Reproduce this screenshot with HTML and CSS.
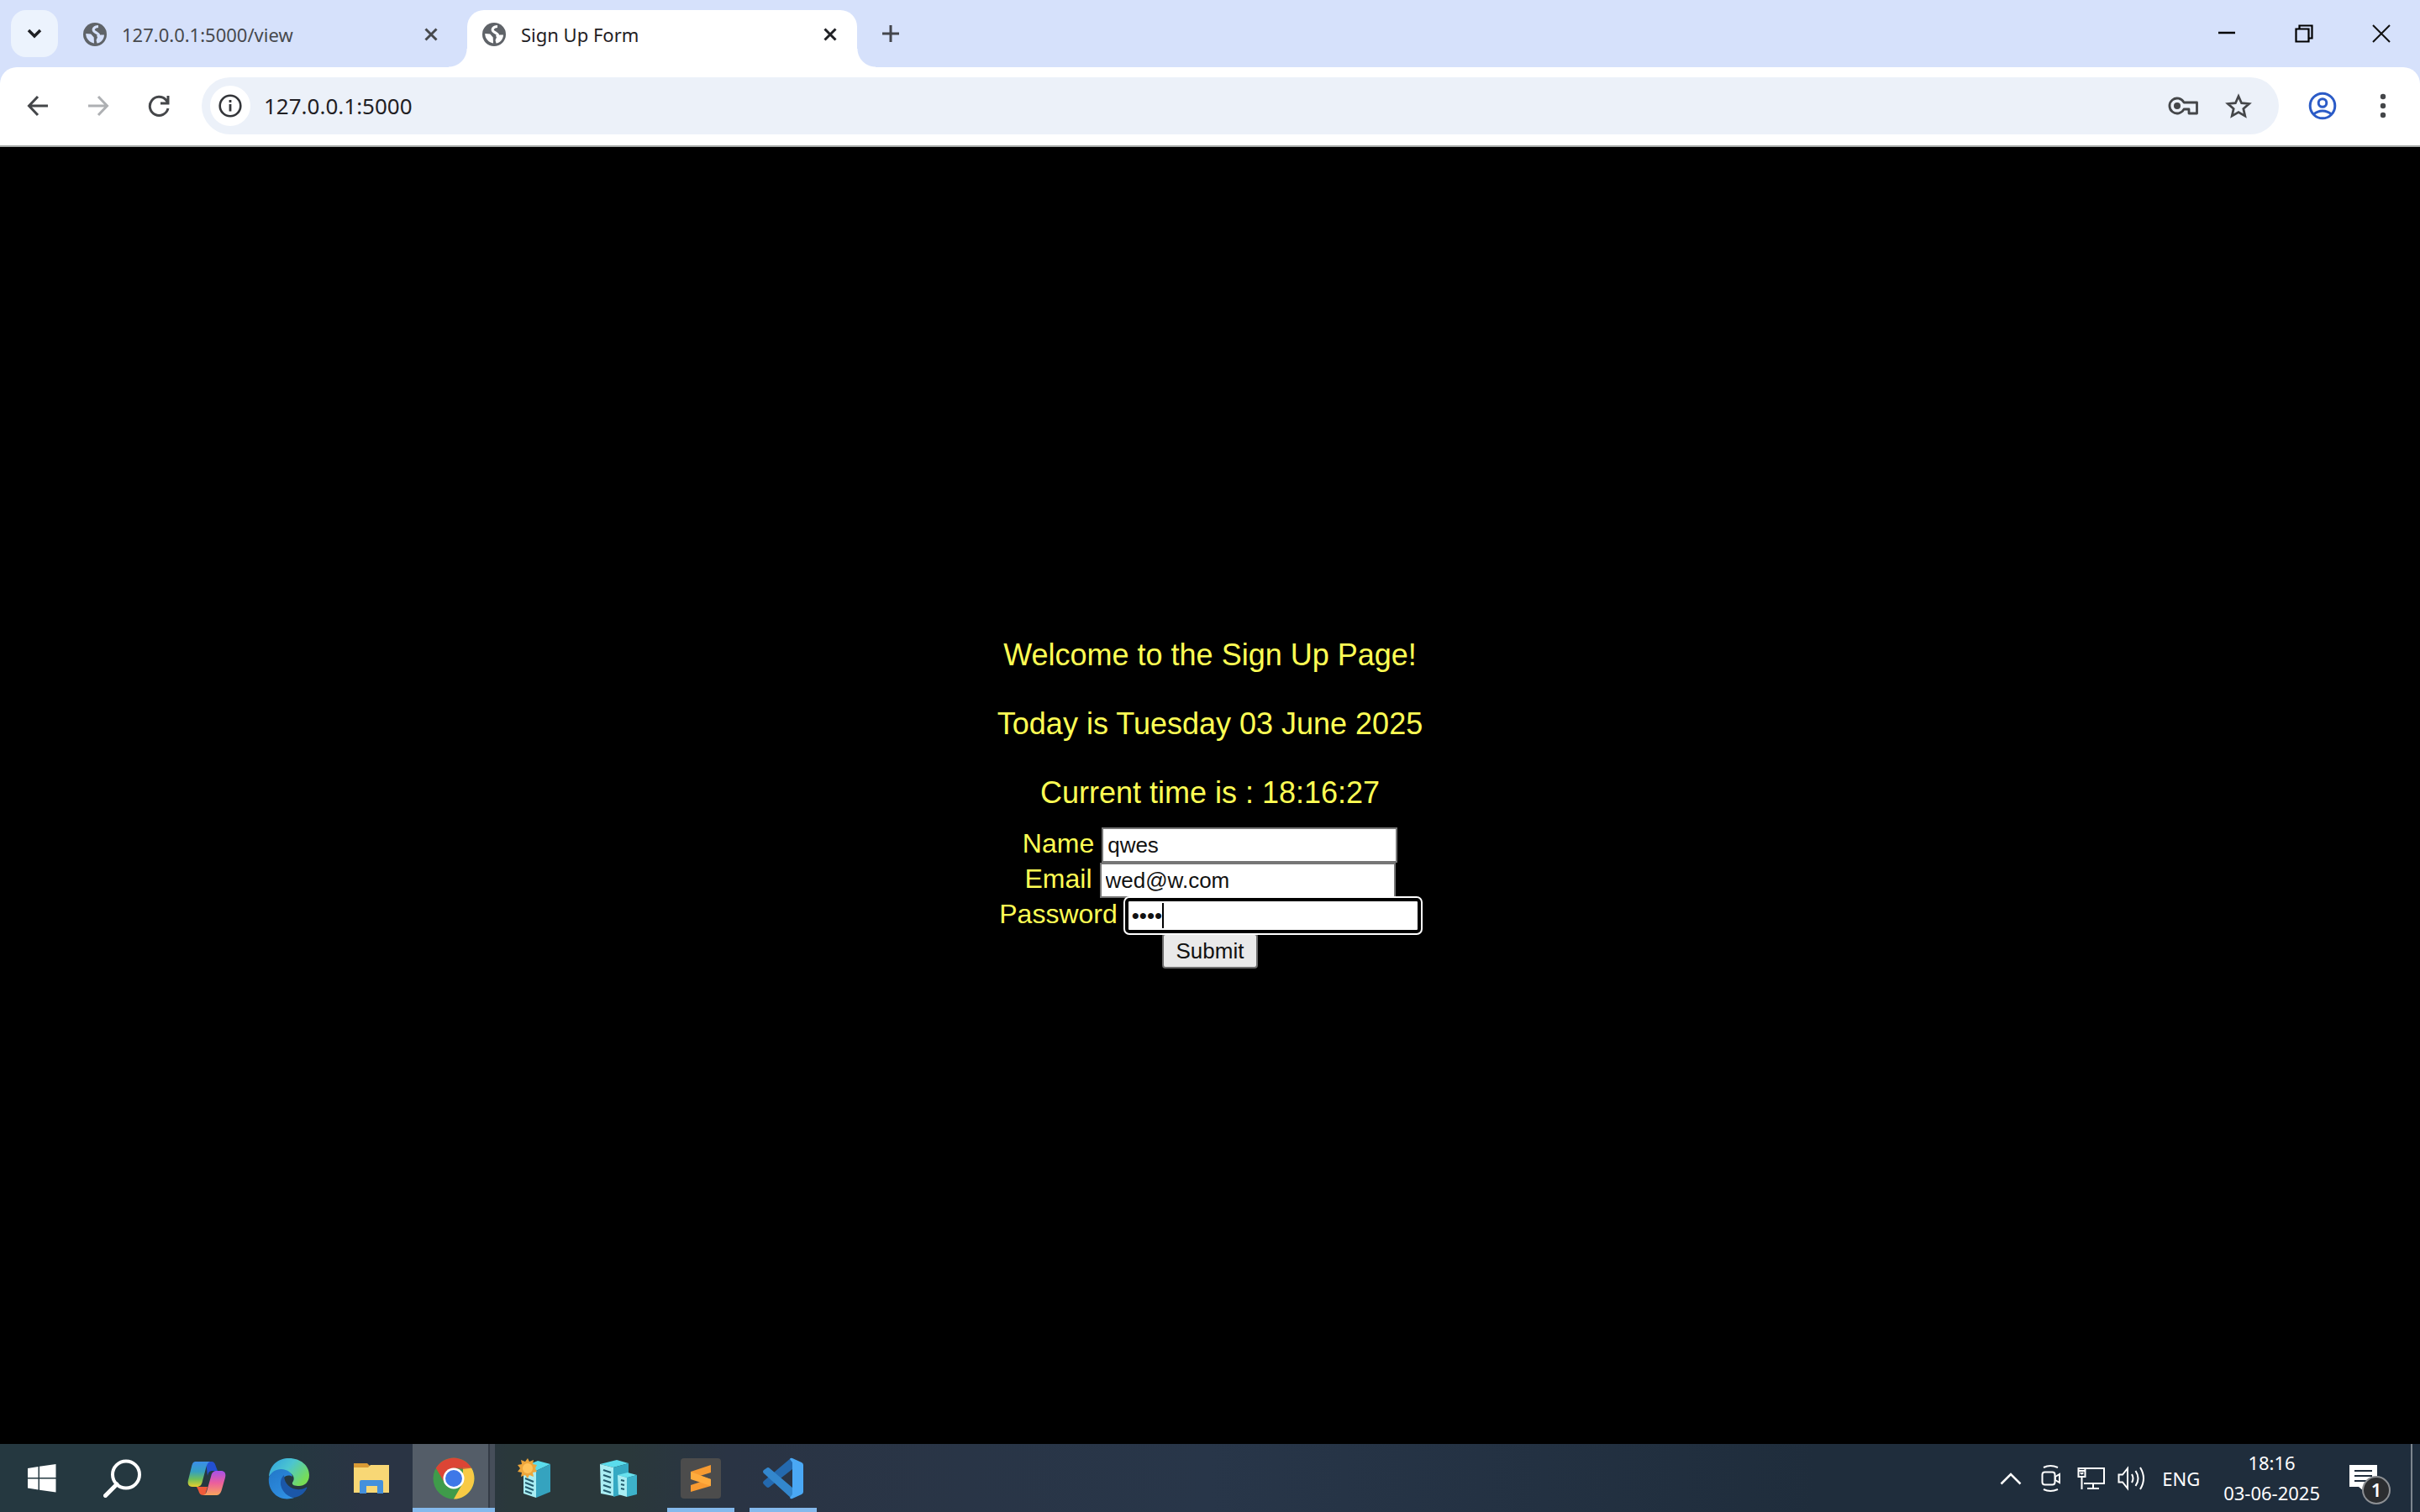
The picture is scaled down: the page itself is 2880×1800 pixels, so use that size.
FILE: index.html
```html
<!DOCTYPE html>
<html lang="en">
<head>
<meta charset="utf-8">
<title>Sign Up Form</title>
<link rel="stylesheet" href="styles.css">
</head>
<body>
<svg class="defs" aria-hidden="true">
  <symbol id="globe" viewBox="0 0 28 28">
    <circle cx="14" cy="14" r="14" fill="#5f6368"/>
    <path fill="none" stroke="currentColor" stroke-width="3.200" d="M18 4.500c-5 0-8 4-4 6.500s6 3 3 6"/>
    <path fill="currentColor" d="M25 14.500c0 5-4 9.500-8.500 10l-1-3.500 2-5 3-1.500z"/>
    <path fill="currentColor" d="M3.200 13l6 .5 3.500 4 .300 7c-5-1-9.800-5-9.800-11.500z"/>
  </symbol>
  <symbol id="cross" viewBox="0 0 16 16"><path d="M1.500 1.500l13 13m0-13l-13 13" fill="none" stroke="currentColor" stroke-width="3"/></symbol>
</svg>

<header class="browser">
  <div class="tabstrip">
    <button class="tab-search" aria-label="Search tabs"><svg width="18" height="12" viewBox="0 0 18 12"><path d="M2 2l7 7 7-7" fill="none" stroke="#1f2024" stroke-width="3.500"/></svg></button>
    <div class="tab">
      <svg class="favicon on-blue"><use href="#globe"/></svg>
      <span class="tab-title">127.0.0.1:5000/view</span>
      <button class="tab-close" aria-label="Close tab"><svg><use href="#cross"/></svg></button>
    </div>
    <div class="tab active">
      <svg class="favicon"><use href="#globe"/></svg>
      <span class="tab-title">Sign Up Form</span>
      <button class="tab-close" aria-label="Close tab"><svg><use href="#cross"/></svg></button>
    </div>
    <button class="new-tab" aria-label="New tab"><svg width="20" height="20" viewBox="0 0 20 20"><path d="M10 0v20M0 10h20" stroke="#44464c" stroke-width="3"/></svg></button>
    <div class="window-buttons">
      <button aria-label="Minimize"><svg width="22" height="22" viewBox="0 0 22 22"><path d="M1 10h20" stroke="#000" stroke-width="2.500"/></svg></button>
      <button aria-label="Restore"><svg width="22" height="22" viewBox="0 0 22 22" fill="none" stroke="#000" stroke-width="2.200"><path d="M1.500 5.500h15v15h-15zM5.500 5V1.500h15v15H17"/></svg></button>
      <button aria-label="Close"><svg width="22" height="22" viewBox="0 0 22 22"><path d="M1 1l20 20M21 1L1 21" stroke="#111" stroke-width="2"/></svg></button>
    </div>
  </div>
  <div class="toolbar">
    <nav class="nav-buttons">
      <button aria-label="Back"><svg width="26" height="26" viewBox="0 0 26 26" fill="none" stroke="#444649" stroke-width="3"><path d="M25 13H3M13 2L2.500 13 13 24"/></svg></button>
      <button aria-label="Forward"><svg width="26" height="26" viewBox="0 0 26 26" fill="none" stroke="#aeb0b3" stroke-width="3"><path d="M1 13h22M13 2l10.500 11L13 24"/></svg></button>
      <button aria-label="Reload"><svg width="26" height="26" viewBox="0 0 26 26" fill="none" stroke="#444649" stroke-width="3"><path d="M24 16A11 11 0 1 1 21.500 6L24 9M24 1v9h-9"/></svg></button>
    </nav>
    <div class="omnibox">
      <button class="site-info" aria-label="Site information"><svg width="28" height="28" viewBox="0 0 28 28"><circle cx="14" cy="14" r="12.300" fill="none" stroke="#333539" stroke-width="2.600"/><path d="M14 12v8.500M14 7v3" stroke="#333539" stroke-width="2.800"/></svg></button>
      <input class="url" type="text" value="127.0.0.1:5000" aria-label="Address">
      <button class="omni-icon" aria-label="Passwords"><svg width="38" height="24" viewBox="0 0 38 24" fill="none" stroke="#444649" stroke-width="2.800"><path d="M19 8a9 9 0 1 0 0 8h6v5h9.500V8z" stroke-linejoin="round"/><circle cx="11" cy="12" r="4" fill="#444649" stroke="none"/></svg></button>
      <button class="omni-icon" aria-label="Bookmark"><svg width="32" height="30" viewBox="0 0 32 30"><path d="M16 3.500l3.600 8.200 9 .8-6.800 5.900 2 8.700-7.800-4.600-7.800 4.600 2-8.700-6.800-5.900 9-.8z" fill="none" stroke="#444649" stroke-width="2.700"/></svg></button>
    </div>
    <button class="profile" aria-label="Profile"><svg width="34" height="34" viewBox="0 0 34 34" fill="none" stroke="#2b5bc7" stroke-width="3"><circle cx="17" cy="17" r="14.800"/><circle cx="17" cy="13.500" r="4.800"/><path d="M6.500 27c6-5.500 15-5.500 21 0"/></svg></button>
    <button class="menu" aria-label="Menu"><svg width="8" height="30" viewBox="0 0 8 30" fill="#444649"><circle cx="4" cy="4" r="3.200"/><circle cx="4" cy="15" r="3.200"/><circle cx="4" cy="26" r="3.200"/></svg></button>
  </div>
</header>

<main class="page">
  <p>Welcome to the Sign Up Page!</p>
  <p>Today is Tuesday 03 June 2025</p>
  <p>Current time is : 18:16:27</p>
  <form class="signup">
    <div class="row"><label for="name">Name</label><input id="name" type="text" value="qwes"></div>
    <div class="row"><label for="email">Email</label><input id="email" type="email" value="wed@w.com"></div>
    <div class="row"><label for="password">Password</label><span class="focused"><input id="password" type="password" value="1234"><i class="caret"></i></span></div>
    <button class="submit" type="button">Submit</button>
  </form>
</main>

<footer class="taskbar">
  <div class="apps">
    <button class="app" aria-label="Start"><svg width="34" height="34" viewBox="0 0 34 34" fill="#fff"><path d="M0 5l12.500-2v13H0zM14 2.800L33.500 0v16H14zM0 17.500h12.500v13L0 28.500zM14 17.500h19.500v16L14 30.800z"/></svg></button>
    <button class="app" aria-label="Search"><svg width="50" height="46" viewBox="0 0 50 46" fill="none" stroke="#fff"><circle cx="27" cy="18.500" r="16" stroke-width="4"/><path d="M16 30L2.500 43.500" stroke-width="5" stroke-linecap="round"/></svg></button>
    <button class="app" aria-label="Copilot"><svg width="46" height="42" viewBox="0 0 46 42">
      <defs>
        <linearGradient id="cpa" x1="0" y1="0" x2="0" y2="1"><stop offset="0" stop-color="#3b8de8"/><stop offset=".4" stop-color="#35a0c0"/><stop offset=".7" stop-color="#6fbf5a"/><stop offset="1" stop-color="#e9cf2d"/></linearGradient>
        <linearGradient id="cpb" x1="0" y1="0" x2="0" y2="1"><stop offset="0" stop-color="#a650e8"/><stop offset=".5" stop-color="#ec5f9c"/><stop offset="1" stop-color="#f8a45c"/></linearGradient>
      </defs>
      <path d="M22 1h7c3 0 4 3 5 6l2 5h-6c-4 0-5 2-6 6z" fill="#2350d0"/>
      <path d="M11 31h13l-3 10h-2c-4 0-5-3-6-6z" fill="#ee5a3a"/>
      <path d="M10 1h17c-3 1-4 4-5 8l-4 15c-1 5-3 7-7 7H6c-5 0-6-4-5-8L5 7c1-4 2-6 5-6z" fill="url(#cpa)"/>
      <path d="M35 41H19c3-1 4-4 5-8l4-14c1-5 3-7 7-7h5c5 0 6 4 5 8l-4 14c-1 4-3 7-6 7z" fill="url(#cpb)"/></svg></button>
    <button class="app" aria-label="Edge"><svg width="50" height="50" viewBox="0 0 50 50">
      <defs>
        <linearGradient id="eda" x1="0" y1="0" x2="1" y2=".6"><stop offset="0" stop-color="#2f9fe0"/><stop offset=".5" stop-color="#4cc5d0"/><stop offset="1" stop-color="#77dd55"/></linearGradient>
        <linearGradient id="edb" x1="0" y1="0" x2=".6" y2="1"><stop offset="0" stop-color="#2277c8"/><stop offset="1" stop-color="#2f8fe2"/></linearGradient>
      </defs>
      <path d="M1 23C2 9 12 1 25 1c14 0 24 9 24 20 0 9-6 13-12 13-5 0-9-1-8-4 4-5 1-12-8-13C11 16 4 18 1 23z" fill="url(#eda)"/>
      <path d="M1 24c3-9 13-12 20-9 6 2 8 6 8 8-7-5-15 3-13 11 2 7 8 12 15 14C13 54-1 40 1 24z" fill="url(#edb)"/>
      <path d="M19 21c-9 8-2 24 11 27 8-1 13-5 16-11 1-1 0-2-1-1-12 6-26-1-26-15z" fill="#1b57a8"/></svg></button>
    <button class="app" aria-label="File Explorer"><svg width="44" height="38" viewBox="0 0 44 38"><path d="M1 1h16l3 3v5H1z" fill="#d99a35"/><path d="M1 6h17l3-3h22v33H1z" fill="#f8d775"/><path d="M8 37V23q0-2 2-2h24q2 0 2 2v14h-7v-9H16v9z" fill="#4490dc"/></svg></button>
    <button class="app running current" aria-label="Chrome"><svg width="50" height="50" viewBox="0 0 50 50"><circle cx="25" cy="25" r="24.500" fill="#3f9b4a"/><path d="M3.800 12.800A24.500 24.500 0 0 1 46.200 12.800H25L14.500 31z" fill="#dc4535"/><path d="M46.200 12.800A24.500 24.500 0 0 1 25 49.500L35.600 31 36 12.800z" fill="#f8ca45"/><path d="M25 12.800h21.200l-10 1z" fill="#dc4535"/><circle cx="25" cy="25" r="12.500" fill="#fff"/><circle cx="25" cy="25" r="10" fill="#3e78e8"/></svg></button>
    <button class="app" aria-label="New server"><svg width="44" height="48" viewBox="0 0 44 48"><path d="M7 10L24 3l15 4-17 8z" fill="#5bdcec"/><path d="M7 12l15 3v32L7 42z" fill="#a9edf3"/><path d="M22 15l17-8v33l-17 7z" fill="#35a3bf"/><path d="M9 24l10 4M9 29l10 4M9 34l10 4M9 39l8 3" stroke="#235a6c" stroke-width="2"/><path d="M12 0l2 4 5-2-1 5 5 1-2 4 2 4-5 1 1 5-5-2-2 4-3-4-5 2 1-5-5-1 3-4-3-4 5-1-1-5 5 2z" fill="#eda63b"/><circle cx="12" cy="12" r="6" fill="#ffc35a"/></svg></button>
    <button class="app" aria-label="Servers"><svg width="46" height="46" viewBox="0 0 46 46"><path d="M1 6L21 1l14 4-18 5z" fill="#5bdcec"/><path d="M1 6l16 4v34L2 41z" fill="#a9edf3"/><path d="M17 10l18-5v35l-18 5z" fill="#35a9c3"/><path d="M5 13l9 3M5 19l9 3M5 25l9 3M5 31l9 3M5 37l9 3" stroke="#235a6c" stroke-width="2"/><path d="M22 19l12-3 11 3-11 3z" fill="#68e1ee"/><path d="M22 19l11 3v23l-10-3z" fill="#a9edf3"/><path d="M33 22l12-3v23l-12 3z" fill="#3db2ca"/><path d="M26 25l4 1M26 30l4 1M26 35l4 1" stroke="#235a6c" stroke-width="2"/></svg></button>
    <button class="app running" aria-label="Sublime Text"><svg width="48" height="48" viewBox="0 0 48 48"><rect width="48" height="48" rx="4" fill="#4c4c4c"/><path d="M12 16l24-8v9l-13 4 13 4v8l-24 7v-8l12-4-12-4z" fill="#f79a31"/><path d="M12 16l24 9v8l-24-8z" fill="#ffab3d"/></svg></button>
    <button class="app running" aria-label="Visual Studio Code"><svg width="50" height="50" viewBox="0 0 50 50"><path d="M36 1v13L9 35q-2 2-4 0l-3-3q-2-2 0-4L34 1z" fill="#2469ae"/><path d="M36 49V36L9 13q-2-2-4 0l-3 2q-2 2 0 4l32 29z" fill="#3387cd"/><path d="M36 1l11 5q2 1 2 3v32q0 2-2 3l-11 5q-2 1-3-1l3-4V6l-3-4q1-2 3-1z" fill="#4aa8f5"/></svg></button>
  </div>
  <div class="tray">
    <button aria-label="Show hidden icons"><svg width="26" height="16" viewBox="0 0 26 16"><path d="M1.500 14.500L13 3l11.500 11.500" fill="none" stroke="#fff" stroke-width="2.500"/></svg></button>
    <button aria-label="Camera"><svg width="24" height="34" viewBox="0 0 24 34" fill="none" stroke="#fff" stroke-width="2"><rect x="1.500" y="9.500" width="15" height="15" rx="3"/><path d="M17 15l5-3v10l-5-3zM3 4q8-4 17 0M3 30q8 4 17 0"/></svg></button>
    <button aria-label="Network"><svg width="34" height="28" viewBox="0 0 34 28" fill="none" stroke="#fff" stroke-width="2"><path d="M10 2h22v18H8M19 20v6M12 26h14M1.500 2h8v10h-8zM5.500 12v15M2 5h7M4 7q1.500 3 3 0"/></svg></button>
    <button aria-label="Volume"><svg width="34" height="30" viewBox="0 0 34 30" fill="none" stroke="#fff" stroke-width="2"><path d="M1.500 10.500H6L12 3v24l-6-7.500H1.500zM17 10q3 5 0 10M21.500 6q6 9 0 18M27 2q8 13 0 26"/></svg></button>
    <span class="language">ENG</span>
    <div class="clock"><time>18:16</time><time>03-06-2025</time></div>
    <button class="notifications" aria-label="Notifications"><svg width="34" height="32" viewBox="0 0 34 32"><path d="M0 0h33v26H22l-5 5-6-5H0z" fill="#fff"/><path d="M6 7h21M6 13h21M6 19h14" stroke="#1f2d3c" stroke-width="2"/></svg><span class="badge">1</span></button>
    <div class="show-desktop"></div>
  </div>
</footer>
</body>
</html>
```
FILE: styles.css
```css
* { box-sizing: border-box; }

body {
  margin: 0;
  min-height: 100vh;
  display: flex;
  flex-direction: column;
  background: #000;
  font-family: "Noto Sans", "Open Sans", sans-serif;
}

button {
  display: flex;
  align-items: center;
  justify-content: center;
  padding: 0;
  border: 0;
  background: none;
  color: inherit;
  font: inherit;
}

svg { display: block; flex: none; }
.defs { position: absolute; width: 0; height: 0; }

/* Browser chrome */
.browser { background: #d6e1fb; }

.tabstrip {
  display: flex;
  align-items: flex-start;
  height: 80px;
  padding: 12px 0 0 13px;
}

.tab-search {
  width: 56px;
  height: 56px;
  margin-right: 12px;
  border-radius: 18px;
  background: #ecf3fd;
}

.tab {
  position: relative;
  display: flex;
  align-items: center;
  width: 464px;
  height: 68px;
  padding: 0 24px 10px 18px;
  color: #47494d;
}

.tab + .tab { margin-left: 11px; }

.tab.active {
  background: #fff;
  border-radius: 20px 20px 0 0;
  color: #1f2024;
}

.tab.active::before,
.tab.active::after {
  content: "";
  position: absolute;
  bottom: 0;
  width: 22px;
  height: 22px;
}

.tab.active::before { right: 100%; background: radial-gradient(circle at 0 0, transparent 21px, #fff 22px); }
.tab.active::after { left: 100%; background: radial-gradient(circle at 100% 0, transparent 21px, #fff 22px); }

.favicon { width: 28px; height: 28px; margin-right: 18px; color: #fff; }
.favicon.on-blue { color: #d6e1fb; }
.tab-title { flex: 1; font-size: 22px; line-height: 32px; }
.tab-close svg { width: 16px; height: 16px; }
.new-tab { width: 56px; height: 56px; margin-left: 12px; }
.window-buttons { display: flex; margin-left: auto; }
.window-buttons button { width: 92px; height: 56px; }

.toolbar {
  display: flex;
  align-items: center;
  height: 95px;
  padding: 0 40px 1px 20px;
  background: #fff;
  border-bottom: 2px solid #a6aaa8;
  border-radius: 20px 20px 0 0;
}

.nav-buttons { display: flex; gap: 22px; margin-right: 26px; }
.nav-buttons button { width: 50px; height: 50px; }

.omnibox {
  display: flex;
  flex: 1;
  align-items: center;
  height: 68px;
  padding: 0 32px 0 10px;
  border-radius: 34px;
  background: #ecf1f9;
}

.site-info { width: 48px; height: 48px; border-radius: 50%; background: #fff; }

.url {
  flex: 1;
  min-width: 0;
  padding: 0;
  margin-left: 16px;
  border: 0;
  background: none;
  color: #1f2024;
  font: 26px/36px "Noto Sans", sans-serif;
}

.omni-icon { margin-left: 30px; }
.profile { margin-left: 35px; }
.menu { margin-left: 51px; }

/* Sign-up page */
.page {
  flex: 1;
  display: flex;
  flex-direction: column;
  align-items: center;
  justify-content: center;
  padding-top: 18px;
  color: #ffff54;
  font-family: "Liberation Sans", Arial, sans-serif;
}

.page p { margin: 0 0 40px; font-size: 36px; line-height: 42px; }
.page p:nth-of-type(3) { margin-bottom: 20px; }

.signup { display: flex; flex-direction: column; align-items: center; font-size: 32px; }

.row { display: flex; align-items: baseline; gap: 9px; height: 42px; }

.row input {
  width: 352px;
  height: 42px;
  padding: 2px 5px;
  border: 2px solid #767676;
  background: #fff;
  color: #111;
  font: 26px/34px "Liberation Sans", Arial, sans-serif;
}

.focused { position: relative; }

.focused input {
  border: 4px solid #000;
  border-radius: 5px;
  padding: 0 4px;
  outline: 2px solid #fff;
}

.caret {
  position: absolute;
  left: 44px;
  top: 6px;
  width: 2px;
  height: 30px;
  background: #000;
}

.submit {
  width: 114px;
  height: 42px;
  border: 2px solid #6b6b6b;
  border-radius: 4px;
  background: #e9e9e9;
  color: #111;
  font-size: 26px;
}

/* Taskbar */
.taskbar {
  display: flex;
  justify-content: space-between;
  height: 81px;
  background: linear-gradient(90deg, #253840 0, #253840 12%, #2a3444 15%, #2a3444 19%, #2a383b 21%, #2a383b 26%, #2a3444 30%, #283649 50%, #1f2d3c 75%);
  color: #fff;
}

.apps, .tray { display: flex; }
.apps { padding-left: 1px; }
.app { width: 98px; }
.app.running { background: linear-gradient(#84b9ec, #84b9ec) center bottom / 80px 5px no-repeat; }

.app.current {
  background:
    linear-gradient(#84b9ec, #84b9ec) center bottom / 100% 5px no-repeat,
    linear-gradient(90deg, #545d68 90px, #343b46 90px, #343b46 92px, #464e5a 92px);
}

.tray { align-items: center; font-size: 22px; }
.tray svg { overflow: visible; }
.tray > button { width: 48px; height: 81px; }
.language { margin: 0 28px 0 12px; }

.clock { display: flex; flex-direction: column; align-items: center; padding-bottom: 2px; line-height: 36px; }

.tray > .notifications { position: relative; width: 108px; padding-right: 4px; }

.badge {
  position: absolute;
  left: 50px;
  top: 38px;
  width: 34px;
  height: 34px;
  border: 2px solid #8c8f93;
  border-radius: 50%;
  background: #2b2d30;
  font-size: 22px;
  font-weight: 600;
  line-height: 28px;
  text-align: center;
}

.show-desktop { width: 11px; height: 81px; border-left: 2px solid #7d858e; }
```
